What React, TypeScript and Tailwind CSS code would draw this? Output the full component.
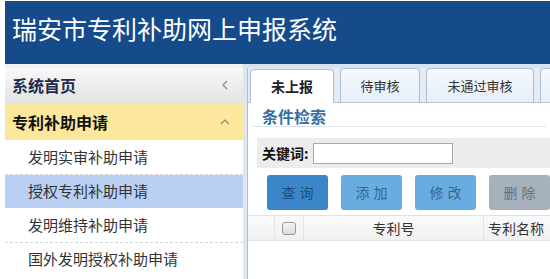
import React from "react";

const font = { fontFamily: '"Noto Sans CJK SC", "Noto Sans", sans-serif' };

export default function App() {
  return (
    <div className="w-[550px] h-[279px] overflow-hidden bg-white relative" style={font}>
      <div className="ml-[5px] mt-[1px] h-[63px] bg-[#154b8a] pl-[7px] pt-[11px]">
        <div className="text-white text-[25px] leading-[32px] whitespace-nowrap">瑞安市专利补助网上申报系统</div>
      </div>
      <div className="ml-[5px] h-[4px] flex">
        <div className="w-[238px] shrink-0 bg-[#eef2f7]" />
        <div className="flex-1 bg-[#d5e2f0]" />
      </div>
      <div className="ml-[5px] flex h-[211px]">
        <div className="w-[238px] shrink-0 flex flex-col">
          <div className="h-[35px] shrink-0 flex items-center justify-between px-[7px] bg-gradient-to-b from-[#f8f8f8] to-[#e3e3e3] border-b border-[#e0e0e0]">
            <span className="text-[16px] font-bold text-[#1d2c4e]">系统首页</span>
            <svg width="10" height="12" viewBox="0 0 10 12" className="mr-[6px]">
              <path d="M7 2 L3 6 L7 10" fill="none" stroke="#888" strokeWidth="1.2" />
            </svg>
          </div>
          <div className="h-[37px] shrink-0 flex items-center justify-between px-[7px] bg-[#fbe89c]">
            <span className="text-[16px] font-bold text-[#111]">专利补助申请</span>
            <svg width="12" height="8" viewBox="0 0 12 8" className="mr-[5px]">
              <path d="M2 6 L6 2 L10 6" fill="none" stroke="#888" strokeWidth="1.2" />
            </svg>
          </div>
          <div className="h-[35px] shrink-0 flex items-center pl-[23px] text-[15px] text-[#333] border-b border-dashed border-[#d8d8d8]">发明实审补助申请</div>
          <div className="h-[33px] shrink-0 flex items-center pl-[23px] text-[15px] text-[#333] bg-[#b9d0f3]">授权专利补助申请</div>
          <div className="h-[35px] shrink-0 flex items-center pl-[23px] text-[15px] text-[#333] border-b border-dashed border-[#d8d8d8]">发明维持补助申请</div>
          <div className="h-[33px] shrink-0 flex items-center pl-[23px] text-[15px] text-[#333]">国外发明授权补助申请</div>
        </div>
        <div className="w-[4px] shrink-0 bg-[#dde6f1]" />
        <div className="flex-1 min-w-0 overflow-hidden border-l border-[#a9c0db] flex flex-col">
          <div className="h-[35px] shrink-0 bg-[#e3ebf5] flex items-end pl-[2px] gap-[6px] border-b border-[#b3c6dd]">
            <div className="w-[84px] shrink-0 h-[34px] bg-white border border-b-0 border-[#a9bdd6] rounded-t-[4px] flex items-center justify-center text-[14px] font-bold text-[#222] -mb-[1px]">未上报</div>
            <div className="w-[80px] shrink-0 h-[34px] bg-gradient-to-b from-[#f6f9fd] to-[#e6eef8] border border-b-0 border-[#a9bdd6] rounded-t-[4px] flex items-center justify-center text-[13px] text-[#333]">待审核</div>
            <div className="w-[108px] shrink-0 h-[34px] bg-gradient-to-b from-[#f6f9fd] to-[#e6eef8] border border-b-0 border-[#a9bdd6] rounded-t-[4px] flex items-center justify-center text-[13px] text-[#333]">未通过审核</div>
            <div className="w-[40px] shrink-0 h-[34px] bg-gradient-to-b from-[#f6f9fd] to-[#e6eef8] border border-b-0 border-[#a9bdd6] rounded-t-[4px]" />
          </div>
          <div className="mx-[4px] pl-[10px] pt-[4px] h-[24px] border-b border-[#dde3ea] text-[16px] leading-[19px] font-bold text-[#3470a8] whitespace-nowrap">条件检索</div>
          <div className="ml-[9px] mt-[11px] h-[30px] bg-[#ececec] flex items-center pl-[5px] whitespace-nowrap">
            <span className="text-[14px] font-bold text-[#111]">关键词:</span>
            <div className="ml-[4px] w-[140px] shrink-0 h-[21px] bg-white border border-[#a8a8a8]" />
          </div>
          <div className="ml-[19px] mt-[7px] flex gap-[13px]">
            <div className="w-[61px] shrink-0 h-[35px] rounded-[3px] bg-[#3b86c8] flex items-center justify-center text-[14px] tracking-[4px] pl-[4px] text-[#1f4d7a]">查询</div>
            <div className="w-[61px] shrink-0 h-[35px] rounded-[3px] bg-[#69ade0] flex items-center justify-center text-[14px] tracking-[4px] pl-[4px] text-[#35658f]">添加</div>
            <div className="w-[61px] shrink-0 h-[35px] rounded-[3px] bg-[#69ade0] flex items-center justify-center text-[14px] tracking-[4px] pl-[4px] text-[#35658f]">修改</div>
            <div className="w-[61px] shrink-0 h-[35px] rounded-[3px] bg-[#a5b2bd] flex items-center justify-center text-[14px] tracking-[4px] pl-[4px] text-[#66717b]">删除</div>
          </div>
          <div className="mt-[5px] h-[26px] flex border-y border-[#e2e2e2] bg-gradient-to-b from-[#fafafa] to-[#f0f0f0] text-[14px] text-[#333] whitespace-nowrap">
            <div className="w-[27px] shrink-0 border-r border-[#e4e4e4]" />
            <div className="w-[29px] shrink-0 border-r border-[#e4e4e4] flex items-center justify-center">
              <div className="w-[14px] h-[13px] rounded-[3px] border border-[#9a9a9a] bg-gradient-to-b from-[#f4f4f4] to-[#dcdcdc]" />
            </div>
            <div className="w-[180px] shrink-0 border-r border-[#e4e4e4] flex items-center justify-center">专利号</div>
            <div className="flex-1 flex items-center pl-[4px]">专利名称</div>
          </div>
        </div>
      </div>
    </div>
  );
}
